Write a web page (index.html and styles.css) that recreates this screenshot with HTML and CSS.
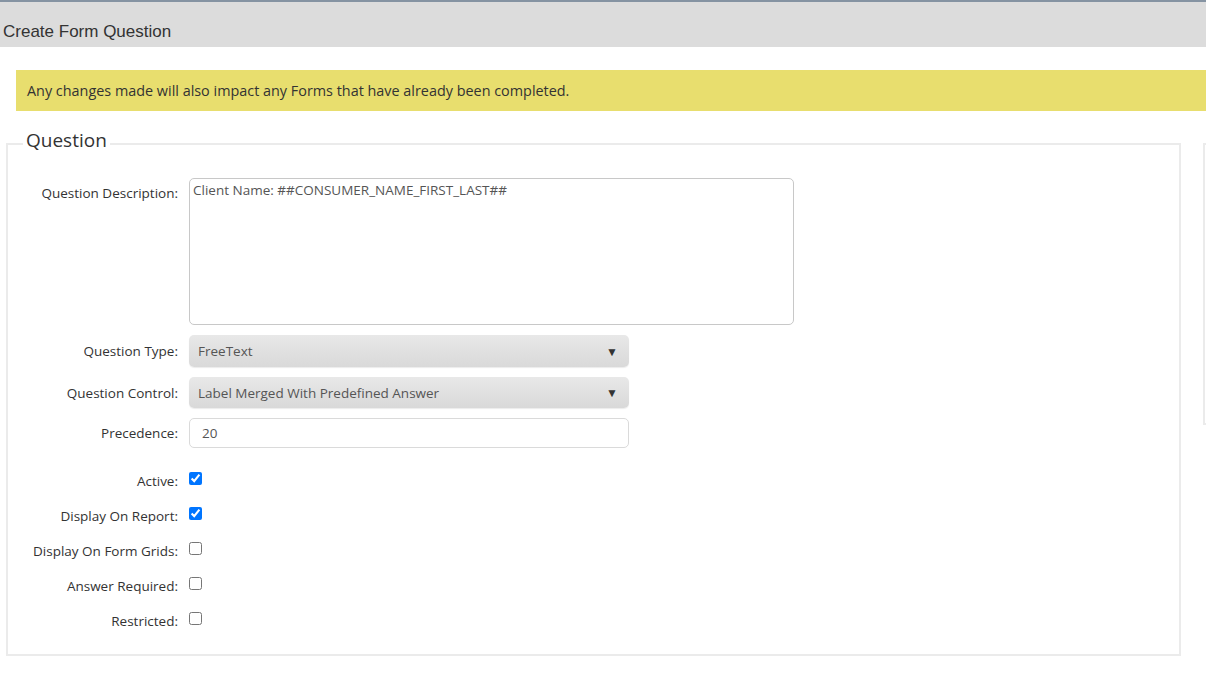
FILE: index.html
```html
<!DOCTYPE html>
<html>
<head>
<meta charset="utf-8">
<link rel="stylesheet" href="styles.css">
</head>
<body>
<div class="topline"></div>
<div class="header">Create Form Question</div>
<div class="alert">Any changes made will also impact any Forms that have already been completed.</div>
<div class="panels">
  <fieldset class="question">
    <legend>Question</legend>
    <div class="row row-desc">
      <label class="lbl lbl-top">Question Description:</label>
      <textarea class="desc">Client Name: ##CONSUMER_NAME_FIRST_LAST##</textarea>
    </div>
    <div class="row row-sel">
      <label class="lbl">Question Type:</label>
      <div class="select"><span>FreeText</span><span class="arrow">&#9660;</span></div>
    </div>
    <div class="row row-sel">
      <label class="lbl">Question Control:</label>
      <div class="select"><span>Label Merged With Predefined Answer</span><span class="arrow">&#9660;</span></div>
    </div>
    <div class="row row-input">
      <label class="lbl">Precedence:</label>
      <input class="text" type="text" value="20">
    </div>
    <div class="checks">
      <div class="row row-check"><label class="lbl">Active:</label><input type="checkbox" checked></div>
      <div class="row row-check"><label class="lbl">Display On Report:</label><input type="checkbox" checked></div>
      <div class="row row-check"><label class="lbl">Display On Form Grids:</label><input type="checkbox"></div>
      <div class="row row-check"><label class="lbl">Answer Required:</label><input type="checkbox"></div>
      <div class="row row-check"><label class="lbl">Restricted:</label><input type="checkbox"></div>
    </div>
  </fieldset>
  <fieldset class="side"></fieldset>
</div>
</body>
</html>
```
FILE: styles.css
```css
html, body {
  margin: 0;
  padding: 0;
  background: #fff;
  overflow: hidden;
}
body {
  width: 1206px;
  height: 683px;
  font-family: "Open Sans", "Noto Sans", sans-serif;
  color: #333;
}
.topline {
  height: 2px;
  background: #8593a2;
}
.header {
  height: 45px;
  background: #dcdcdc;
  font-family: "Liberation Sans", Arial, sans-serif;
  font-size: 17px;
  color: #333;
  padding: 20px 0 0 3px;
  box-sizing: border-box;
  line-height: 20px;
}
.alert {
  margin: 23px 0 0 16px;
  height: 41px;
  background: #e8de6e;
  padding-left: 11px;
  display: flex;
  align-items: center;
  font-size: 14.4px;
  color: #333;
}
.panels {
  display: flex;
  gap: 22px;
  margin-top: 21px;
  padding-left: 6px;
}
fieldset {
  margin: 0;
  box-sizing: border-box;
  flex: none;
}
.question {
  width: 1175px;
  height: 524px;
  padding: 22px 0 0 0;
  border: 2px solid #ebebeb;
}
.question legend {
  font-size: 19px;
  color: #333;
  padding: 0 3px 0 3px;
  margin-left: 15px;
  line-height: 16px;
  height: 24px;
}
.side {
  width: 60px;
  height: 282px;
  margin-top: 11px;
  border: 2px solid #ebebeb;
  padding: 0;
}
.row {
  display: flex;
  align-items: center;
}
.lbl {
  width: 170px;
  text-align: right;
  margin-right: 11px;
  font-size: 13.5px;
  color: #333;
  flex: none;
}
.row-desc {
  align-items: flex-start;
  margin-bottom: 10px;
}
.lbl-top {
  padding-top: 6px;
}
.desc {
  width: 605px;
  height: 147px;
  box-sizing: border-box;
  border: 1px solid #c8c8c8;
  border-radius: 5px;
  resize: none;
  margin: 0;
  padding: 2px 3px;
  font-family: "Open Sans", "Noto Sans", sans-serif;
  font-size: 13.5px;
  color: #555;
  outline: none;
}
.row-sel {
  margin-bottom: 10px;
}
.select {
  width: 440px;
  height: 32px;
  box-sizing: border-box;
  border-radius: 5px;
  background: linear-gradient(#e8e8e8, #d9d9d9);
  box-shadow: 0 1px 1px rgba(0,0,0,0.08);
  display: flex;
  align-items: center;
  justify-content: space-between;
  padding: 0 11px 0 9px;
  font-size: 13.5px;
  color: #555;
}
.row-sel + .row-sel .select {
  height: 31px;
}
.arrow {
  font-size: 12px;
  color: #333;
}
.text {
  width: 440px;
  height: 30px;
  box-sizing: border-box;
  border: 1px solid #dadada;
  border-radius: 5px;
  margin: 0;
  padding: 0 12px;
  font-family: "Open Sans", "Noto Sans", sans-serif;
  font-size: 13.5px;
  color: #555;
  outline: none;
}
.checks {
  margin-top: 20px;
  display: flex;
  flex-direction: column;
  gap: 15px;
}
.row-check {
  height: 20px;
}
.row-check .lbl {
  padding-top: 6px;
}
.row-check input {
  margin: 0;
  width: 13px;
  height: 13px;
}
```
